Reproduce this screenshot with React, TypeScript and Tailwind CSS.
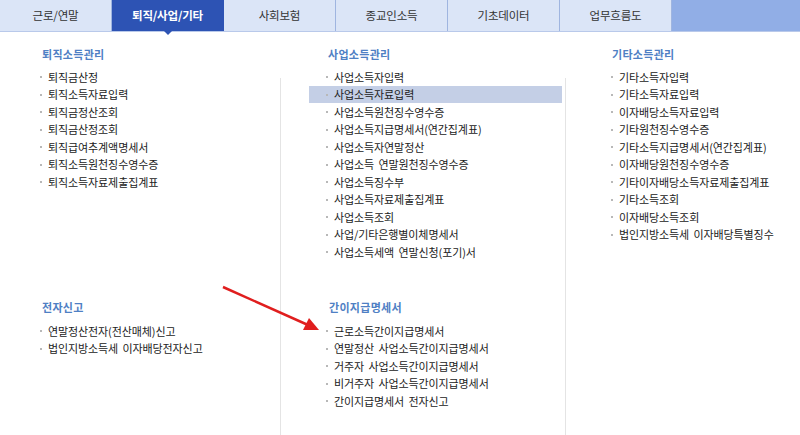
const tabs = ['근로/연말', '퇴직/사업/기타', '사회보험', '종교인소득', '기초데이터', '업무흐름도']

type Section = { title: string; items: string[]; active?: string }

const columns: { top: Section; bottom?: Section; heading: string; list: string; border: boolean; width: string }[] = [
  {
    top: {
      title: '퇴직소득관리',
      items: ['퇴직금산정', '퇴직소득자료입력', '퇴직금정산조회', '퇴직금산정조회', '퇴직급여추계액명세서', '퇴직소득원천징수영수증', '퇴직소득자료제출집계표'],
    },
    bottom: { title: '전자신고', items: ['연말정산전자(전산매체)신고', '법인지방소득세 이자배당전자신고'] },
    heading: 'pl-[42px]',
    list: 'ml-[23px]',
    border: false,
    width: 'w-[280px]',
  },
  {
    top: {
      title: '사업소득관리',
      items: [
        '사업소득자입력',
        '사업소득자료입력',
        '사업소득원천징수영수증',
        '사업소득지급명세서(연간집계표)',
        '사업소득자연말정산',
        '사업소득 연말원천징수영수증',
        '사업소득징수부',
        '사업소득자료제출집계표',
        '사업소득조회',
        '사업/기타은행별이체명세서',
        '사업소득세액 연말신청(포기)서',
      ],
      active: '사업소득자료입력',
    },
    bottom: {
      title: '간이지급명세서',
      items: ['근로소득간이지급명세서', '연말정산 사업소득간이지급명세서', '거주자 사업소득간이지급명세서', '비거주자 사업소득간이지급명세서', '간이지급명세서 전자신고'],
    },
    heading: 'pl-[48px]',
    list: 'ml-[28px] mr-[3px]',
    border: true,
    width: 'w-[285px]',
  },
  {
    top: {
      title: '기타소득관리',
      items: [
        '기타소득자입력',
        '기타소득자료입력',
        '이자배당소득자료입력',
        '기타원천징수영수증',
        '기타소득지급명세서(연간집계표)',
        '이자배당원천징수영수증',
        '기타이자배당소득자료제출집계표',
        '기타소득조회',
        '이자배당소득조회',
        '법인지방소득세 이자배당특별징수',
      ],
    },
    heading: 'pl-[47px]',
    list: 'ml-[28px]',
    border: true,
    width: 'flex-1',
  },
]

function ItemList({ section, className }: { section: Section; className: string }) {
  return (
    <ul className={className}>
      {section.items.map((item) => (
        <li
          key={item}
          className={`flex h-[17.5px] items-center gap-[6px] pl-[17px] text-[11px] tracking-[-0.1px] whitespace-pre text-[#222] [word-spacing:2px] ${
            section.active === item ? 'bg-[#c4cfe6]' : ''
          }`}
        >
          <span className="mt-[1px] h-[2px] w-[2px] shrink-0 bg-[#b8b8b8]" />
          <span>{item}</span>
        </li>
      ))}
    </ul>
  )
}

export default function App() {
  return (
    <div className="relative h-[435px] w-[800px] overflow-hidden bg-white font-['Noto_Sans_CJK_KR',sans-serif]">
      <div className="flex h-[32px] border-b border-[#b9c9ea] bg-[#91aee6]">
        {tabs.map((tab, i) => (
          <div
            key={tab}
            className={`relative flex w-[112px] items-center justify-center border-r text-[11.5px] tracking-[-0.2px] ${
              i === 1
                ? 'border-[#2d53b4] bg-[#2d53b4] font-bold text-white'
                : 'border-[#9fb5e0] bg-[#dbe5f7] text-[#333]'
            }`}
          >
            {tab}
            {i === 1 && (
              <span className="absolute top-[31px] left-1/2 -ml-[4px] h-0 w-0 border-x-[4px] border-t-[4px] border-x-transparent border-t-[#2d53b4]" />
            )}
          </div>
        ))}
      </div>

      <div className="flex">
        {columns.map((col) => (
          <div key={col.top.title} className={`flex flex-col ${col.width}`}>
            <h2 className={`mt-[14px] h-[16px] text-[11px] leading-[16px] font-bold tracking-[0.3px] text-[#4f80c4] ${col.heading}`}>
              {col.top.title}
            </h2>
            <div className={`mt-[16px] h-[357px] ${col.border ? 'border-l border-[#e4e4e4]' : ''}`}>
              <div className="-mt-[10px] h-[231px]">
                <ItemList section={col.top} className={col.list} />
              </div>
              {col.bottom && (
                <>
                  <h2 className={`h-[16px] text-[11px] leading-[16px] font-bold tracking-[0.3px] text-[#4f80c4] ${col.heading}`}>
                    {col.bottom.title}
                  </h2>
                  <ItemList section={col.bottom} className={`mt-[7px] ${col.list}`} />
                </>
              )}
            </div>
          </div>
        ))}
      </div>

      <svg className="absolute top-0 left-0" width="800" height="435" viewBox="0 0 800 435">
        <line x1="223" y1="287" x2="308" y2="325" stroke="#e01e1e" strokeWidth="2.5" />
        <polygon points="319,330 303,330 309,318" fill="#e01e1e" />
      </svg>
    </div>
  )
}
